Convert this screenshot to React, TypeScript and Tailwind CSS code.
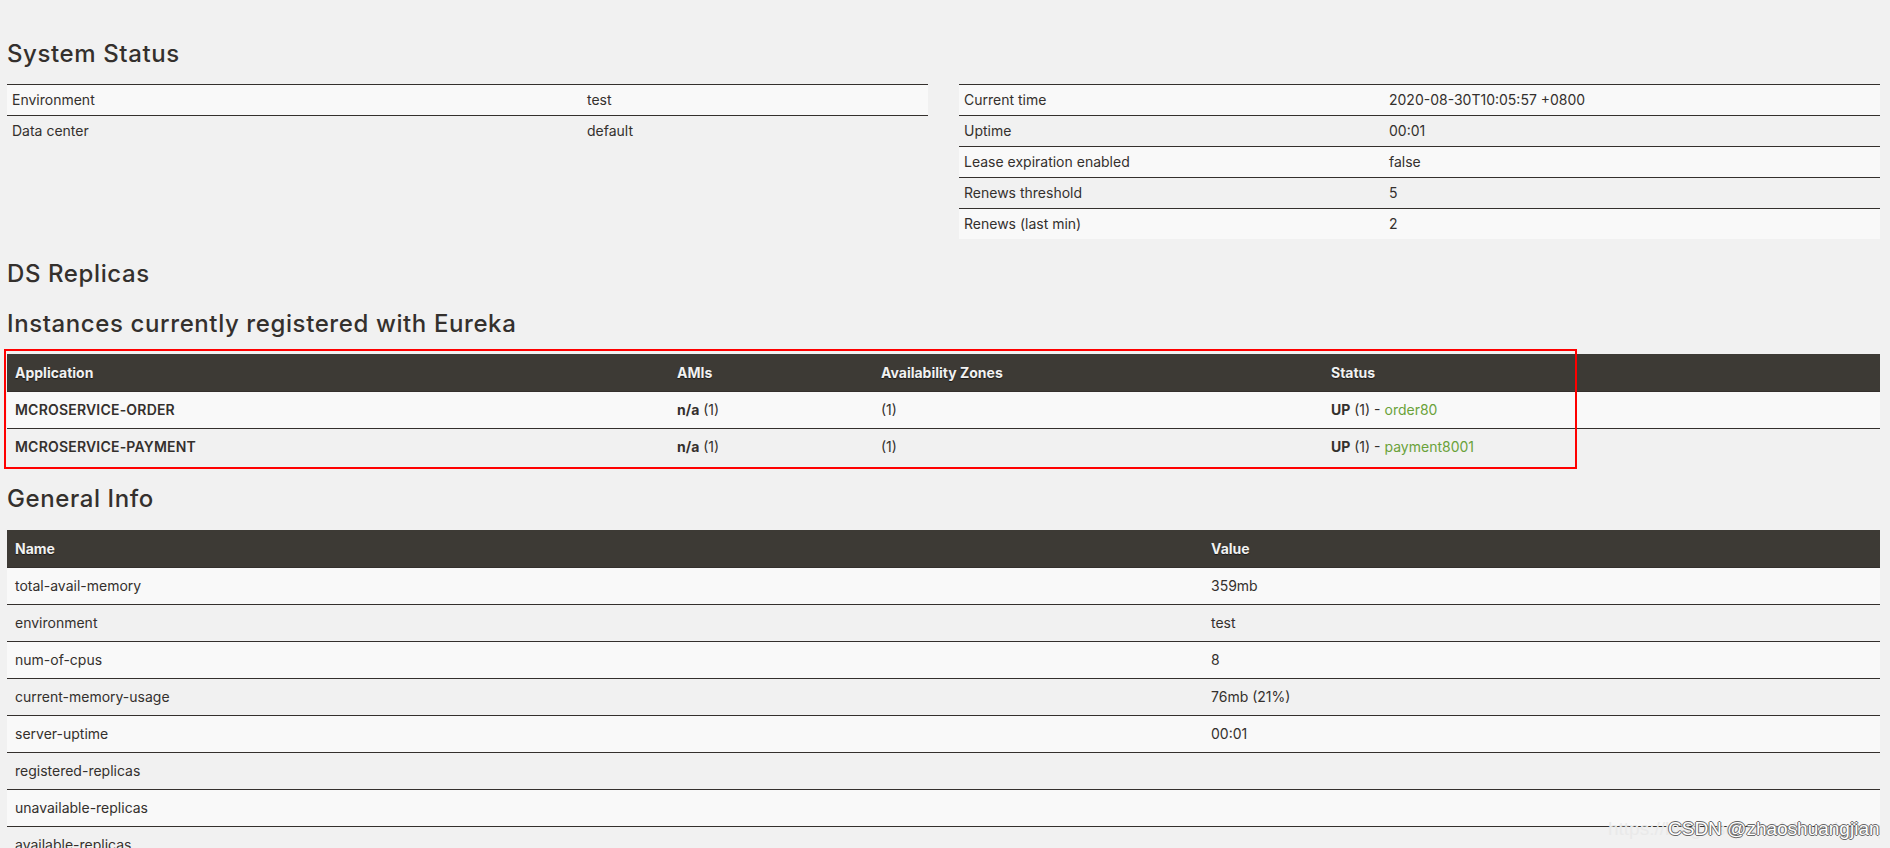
import React from "react";

const statusLeft = [
  ["Environment", "test"],
  ["Data center", "default"],
];

const statusRight = [
  ["Current time", "2020-08-30T10:05:57 +0800"],
  ["Uptime", "00:01"],
  ["Lease expiration enabled", "false"],
  ["Renews threshold", "5"],
  ["Renews (last min)", "2"],
];

const apps = [
  { name: "MCROSERVICE-ORDER", instance: "order80" },
  { name: "MCROSERVICE-PAYMENT", instance: "payment8001" },
];

const generalInfo = [
  ["total-avail-memory", "359mb"],
  ["environment", "test"],
  ["num-of-cpus", "8"],
  ["current-memory-usage", "76mb (21%)"],
  ["server-uptime", "00:01"],
  ["registered-replicas", ""],
  ["unavailable-replicas", ""],
  ["available-replicas", ""],
];

const instanceInfo = [
  ["ipAddr", "192.168.1.5"],
  ["status", "UP"],
];

function Heading({ children, className = "" }: { children: React.ReactNode; className?: string }) {
  return (
    <h1 className={`text-[24px] leading-[24px] font-medium tracking-[0.6px] text-[#34302d] ${className}`}>
      {children}
    </h1>
  );
}

function StatusTable({ rows, firstCol }: { rows: string[][]; firstCol: string }) {
  return (
    <div className="flex flex-col">
      {rows.map((r, i) => (
        <div
          key={r[0]}
          className={`grid ${firstCol} h-[31px] items-center border-t border-[#34302d] text-sm ${
            i % 2 === 0 ? "bg-[#f9f9f9]" : ""
          }`}
        >
          <div className="px-[5px]">{r[0]}</div>
          <div className="px-[5px]">{r[1]}</div>
        </div>
      ))}
    </div>
  );
}

function KeyValueTable({ rows, title }: { rows: string[][]; title: string[] }) {
  return (
    <div className="flex flex-col">
      <div className="grid grid-cols-[1196px_1fr] h-[37px] items-center bg-[#3d3a35] text-[#f1f1f1] text-sm font-bold [text-shadow:0_1px_1px_rgba(0,0,0,0.6)]">
        <div className="px-2">{title[0]}</div>
        <div className="px-2">{title[1]}</div>
      </div>
      {rows.map((r, i) => (
        <div
          key={r[0]}
          className={`grid grid-cols-[1196px_1fr] h-[37px] items-center border-t border-[#34302d] text-sm ${
            i % 2 === 0 ? "bg-[#f9f9f9]" : ""
          }`}
        >
          <div className="px-2">{r[0]}</div>
          <div className="px-2">{r[1]}</div>
        </div>
      ))}
    </div>
  );
}

export default function App() {
  return (
    <div className="relative min-h-screen bg-[#f1f1f1] text-[#34302d] font-['Inter','Noto_Sans',sans-serif] pl-[7px] pr-[10px] pt-[42px] pb-10">
      <Heading>System Status</Heading>
      <div className="grid grid-cols-2 gap-x-[31px] mt-[18px] items-start">
        <StatusTable rows={statusLeft} firstCol="grid-cols-[575px_1fr]" />
        <StatusTable rows={statusRight} firstCol="grid-cols-[425px_1fr]" />
      </div>

      <Heading className="mt-[23px]">DS Replicas</Heading>
      <Heading className="mt-[26px]">Instances currently registered with Eureka</Heading>

      <div className="relative mt-[18px]">
        <div className="flex flex-col">
          <div className="grid grid-cols-[662px_204px_450px_1fr] h-[37px] items-center bg-[#3d3a35] text-[#f1f1f1] text-sm font-bold [text-shadow:0_1px_1px_rgba(0,0,0,0.6)]">
            <div className="px-2">Application</div>
            <div className="px-2">AMIs</div>
            <div className="px-2">Availability Zones</div>
            <div className="px-2">Status</div>
          </div>
          {apps.map((a, i) => (
            <div
              key={a.name}
              className={`grid grid-cols-[662px_204px_450px_1fr] h-[37px] items-center border-t border-[#34302d] text-sm ${
                i % 2 === 0 ? "bg-[#f9f9f9]" : ""
              }`}
            >
              <div className="px-2 font-semibold tracking-[0.2px]">{a.name}</div>
              <div className="px-2">
                <b>n/a</b> (1)
              </div>
              <div className="px-2">(1)</div>
              <div className="px-2">
                <b>UP</b> (1) - <a className="text-[#6aa23a]">{a.instance}</a>
              </div>
            </div>
          ))}
        </div>
        <div className="absolute left-[-3px] top-[-5px] w-[1573px] h-[120px] border-2 border-[#ff0000] pointer-events-none" />
      </div>

      <Heading className="mt-[22px]">General Info</Heading>
      <div className="mt-[19px]">
        <KeyValueTable rows={generalInfo} title={["Name", "Value"]} />
      </div>

      <Heading className="mt-[22px]">Instance Info</Heading>
      <div className="mt-[19px]">
        <KeyValueTable rows={instanceInfo} title={["Name", "Value"]} />
      </div>

      {/* CSDN watermark */}
      <div className="absolute top-[816px] left-[1608px] w-[272px] h-[26px] overflow-hidden font-['Liberation_Sans',Arial,sans-serif] text-[19px] leading-[26px] whitespace-nowrap pointer-events-none">
        <span className="absolute left-0 top-0 text-[#e9e9e9]">https://blog.csdn.net/zhaoshuangjian</span>
        <span className="absolute left-[60px] top-0 text-white [text-shadow:1px_0_0_#666,-1px_0_0_#666,0_1px_0_#666,0_-1px_0_#666]">
          CSDN @zhaoshuangjian
        </span>
      </div>
    </div>
  );
}
